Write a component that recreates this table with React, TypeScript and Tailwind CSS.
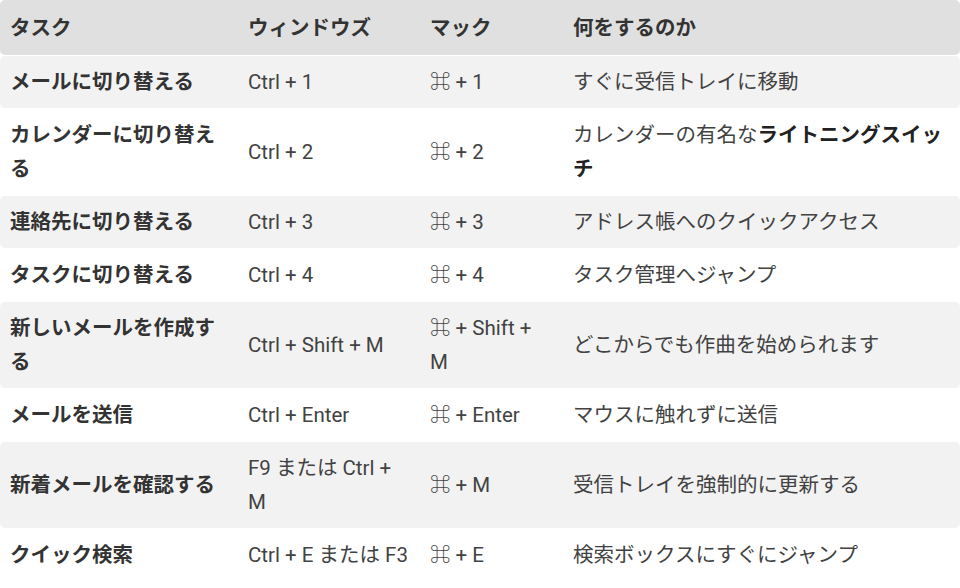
const ROWS: { task: string; win: string; mac: string; what: React.ReactNode }[] = [
  { task: 'メールに切り替える', win: 'Ctrl + 1', mac: '⌘ + 1', what: 'すぐに受信トレイに移動' },
  {
    task: 'カレンダーに切り替える',
    win: 'Ctrl + 2',
    mac: '⌘ + 2',
    what: (
      <>
        カレンダーの有名な<strong className="font-bold text-[#222]">ライトニングスイッチ</strong>
      </>
    ),
  },
  { task: '連絡先に切り替える', win: 'Ctrl + 3', mac: '⌘ + 3', what: 'アドレス帳へのクイックアクセス' },
  { task: 'タスクに切り替える', win: 'Ctrl + 4', mac: '⌘ + 4', what: 'タスク管理へジャンプ' },
  { task: '新しいメールを作成する', win: 'Ctrl + Shift + M', mac: '⌘ + Shift + M', what: 'どこからでも作曲を始められます' },
  { task: 'メールを送信', win: 'Ctrl + Enter', mac: '⌘ + Enter', what: 'マウスに触れずに送信' },
  { task: '新着メールを確認する', win: 'F9 または Ctrl + M', mac: '⌘ + M', what: '受信トレイを強制的に更新する' },
  { task: 'クイック検索', win: 'Ctrl + E または F3', mac: '⌘ + E', what: '検索ボックスにすぐにジャンプ' },
]

const GRID = 'grid grid-cols-[238px_182px_143px_1fr] items-center rounded-[5px]'

export default function App() {
  return (
    <div
      className="w-[960px] h-[588px] bg-white overflow-hidden text-[20.5px] leading-[34px] text-[#424242]"
      style={{ fontFamily: 'Roboto, "Noto Sans CJK JP", sans-serif' }}
    >
      <div className="flex flex-col gap-px">
        {/* Header */}
        <div className={`${GRID} bg-[#e0e0e0] h-[55px] pt-px font-bold text-[#333]`}>
          <div className="px-[10px]">タスク</div>
          <div className="px-[10px]">ウィンドウズ</div>
          <div className="px-[10px]">マック</div>
          <div className="px-[10px]">何をするのか</div>
        </div>

        {ROWS.map((r, i) => (
          <div key={i} className={`${GRID} py-[9px] ${i % 2 === 0 ? 'bg-[#f2f2f2]' : 'bg-white'}`}>
            <div className="px-[10px] font-bold text-[#333]">{r.task}</div>
            <div className="px-[10px]">{r.win}</div>
            <div className="pl-[10px] pr-[16px]">{r.mac}</div>
            <div className="px-[10px]">{r.what}</div>
          </div>
        ))}
      </div>
    </div>
  )
}
